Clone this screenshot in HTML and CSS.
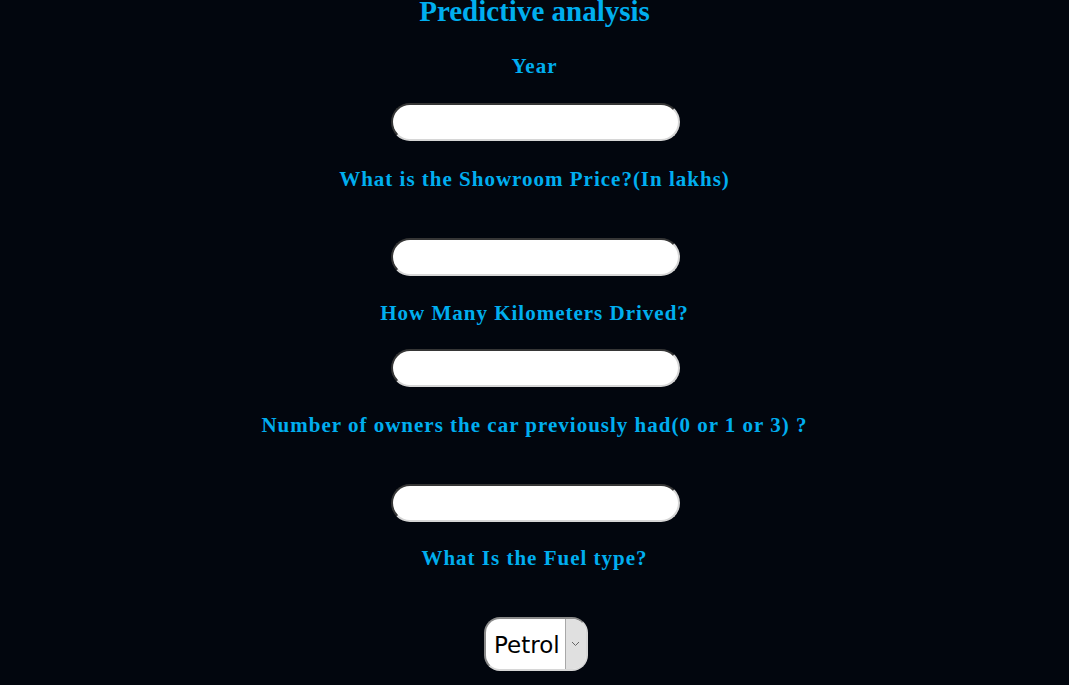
FILE: index.html
```html
<!DOCTYPE html>
<html>
<head>
<meta charset="utf-8">
<link rel="stylesheet" href="styles.css">
</head>
<body>
<main class="page">
  <h1 class="title">Predictive analysis</h1>
  <form class="form">
    <label class="label label-year">Year</label>
    <input class="field" type="text">
    <label class="label label-gap">What is the Showroom Price?(In lakhs)</label>
    <input class="field" type="text">
    <label class="label label-km">How Many Kilometers Drived?</label>
    <input class="field" type="text">
    <label class="label label-gap">Number of owners the car previously had(0 or 1 or 3) ?</label>
    <input class="field" type="text">
    <label class="label label-gap label-fuel">What Is the Fuel type?</label>
    <div class="select-wrap">
      <select class="select">
        <option>Petrol</option>
        <option>Diesel</option>
        <option>CNG</option>
      </select>
      <span class="select-arrow">
        <svg width="9" height="6" viewBox="0 0 9 6"><path d="M1 1 L4.5 4.5 L8 1" fill="none" stroke="#666" stroke-width="1"/></svg>
      </span>
    </div>
  </form>
</main>
</body>
</html>
```

FILE: styles.css
```css
html, body {
  margin: 0;
  padding: 0;
  background: #02060e;
}
.page {
  display: flex;
  flex-direction: column;
  align-items: center;
  font-family: "Liberation Serif", "Times New Roman", serif;
  color: #00aeef;
}
.title {
  margin: -6px 0 0 0;
  font-size: 29px;
  line-height: 34px;
  font-weight: bold;
}
.form {
  display: flex;
  flex-direction: column;
  align-items: center;
}
.label {
  display: block;
  font-size: 21px;
  font-weight: bold;
  letter-spacing: 1px;
  line-height: 24px;
  margin: 26px 0 25px 0;
}
.label-year {
  margin-top: 26px;
  margin-bottom: 25px;
}
.label-km {
  margin-top: 25px;
  margin-bottom: 24px;
}
.label-gap {
  margin-bottom: 47px;
}
.label-fuel {
  margin-top: 24px;
  margin-bottom: 47px;
}
.field {
  box-sizing: border-box;
  width: 289px;
  height: 38px;
  margin-left: 3px;
  border: 2px inset #999;
  border-color: #8a8a8a #d6d6d6 #d6d6d6 #8a8a8a;
  border-radius: 19px;
  background: #fff;
  outline: none;
}
.select-wrap {
  box-sizing: border-box;
  display: flex;
  align-items: stretch;
  width: 104px;
  height: 54px;
  margin-left: 3px;
  border: 2px solid #9a9a9a;
  border-color: #8a8a8a #d6d6d6 #d6d6d6 #8a8a8a;
  border-radius: 16px;
  background: #fff;
  overflow: hidden;
}
.select {
  appearance: none;
  -webkit-appearance: none;
  border: none;
  background: transparent;
  font-family: "DejaVu Sans", sans-serif;
  font-size: 23px;
  color: #000;
  padding: 2px 0 0 8px;
  width: 79px;
  outline: none;
}
.select-arrow {
  display: flex;
  align-items: center;
  justify-content: center;
  flex: 1;
  background: #e0e0e0;
  border-left: 1px solid #a8a8a8;
}
```
